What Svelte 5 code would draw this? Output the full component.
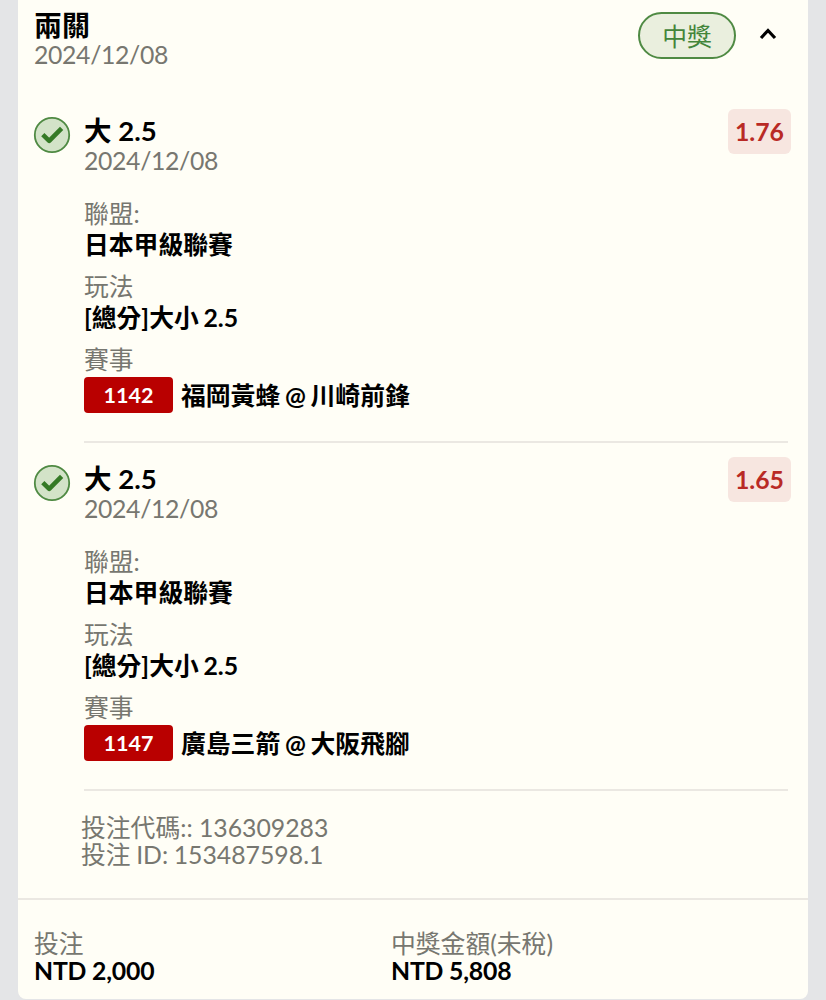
<script>
  let open = $state(true)

  const legs = [
    {
      pick: '大 2.5',
      date: '2024/12/08',
      odds: '1.76',
      league: '日本甲級聯賽',
      market: '[總分]大小 2.5',
      code: '1142',
      match: '福岡黃蜂 @ 川崎前鋒',
    },
    {
      pick: '大 2.5',
      date: '2024/12/08',
      odds: '1.65',
      league: '日本甲級聯賽',
      market: '[總分]大小 2.5',
      code: '1147',
      match: '廣島三箭 @ 大阪飛腳',
    },
  ]

  const totals = [
    { label: '投注', value: 'NTD 2,000' },
    { label: '中獎金額(未稅)', value: 'NTD 5,808' },
  ]
</script>

<main>
  <article>
    <header>
      <div>
        <h1>兩關</h1>
        <p class="date">2024/12/08</p>
      </div>
      <span class="status">中獎</span>
      <button aria-label="toggle" onclick={() => (open = !open)}>
        <svg class:closed={!open} viewBox="0 0 18 12" width="18" height="12">
          <path d="M2 10 9 2.5l7 7.5" />
        </svg>
      </button>
    </header>

    {#if open}
      {#each legs as leg}
        <section class="leg">
          <svg class="check" viewBox="0 0 38 38" width="38" height="38">
            <circle cx="19" cy="19" r="17.2" />
            <path d="M9.8 18.6l6.4 6.2L28.6 12.4" />
          </svg>
          <div class="body">
            <div class="top">
              <div>
                <h2>{leg.pick}</h2>
                <p class="date">{leg.date}</p>
              </div>
              <span class="odds">{leg.odds}</span>
            </div>
            <dl>
              <dt>聯盟:</dt>
              <dd>{leg.league}</dd>
              <dt>玩法</dt>
              <dd>{leg.market}</dd>
              <dt>賽事</dt>
              <dd class="match"><span class="code">{leg.code}</span>{leg.match}</dd>
            </dl>
          </div>
        </section>
      {/each}

      <div class="ids">
        <p>投注代碼:: 136309283</p>
        <p>投注 ID: 153487598.1</p>
      </div>
    {/if}

    <footer>
      {#each totals as total}
        <div>
          <p>{total.label}</p>
          <strong>{total.value}</strong>
        </div>
      {/each}
    </footer>
  </article>
</main>

<style>
  main {
    box-sizing: border-box;
    height: 1000px;
    padding: 0 18px 1px;
    background: #e4e5e7;
    color: #000;
    font-family: Lato, 'Noto Sans CJK TC', sans-serif;
    font-size: 24.8px;
    line-height: 30px;
  }

  article {
    box-sizing: border-box;
    height: 999px;
    background: #fffef6;
    border-radius: 0 0 8px 8px;
  }

  h1,
  h2,
  p,
  dl,
  dd {
    margin: 0;
  }

  h1,
  h2 {
    font-size: 28px;
    font-weight: 700;
    line-height: 30px;
  }

  h2 {
    font-size: 27.5px;
  }

  .date,
  dt,
  .ids,
  footer p {
    color: #777770;
  }

  .date {
    letter-spacing: -0.35px;
  }

  header {
    display: flex;
    align-items: flex-start;
    height: 105px;
    padding: 10px 31px 0 16px;
    box-sizing: border-box;

    & div {
      flex-grow: 1;
    }

    & button {
      display: flex;
      margin: 18px 0 0 23px;
      padding: 0;
      border: none;
      background: none;
    }

    & path {
      fill: none;
      stroke: #000;
      stroke-width: 3.2;
    }

    & .closed {
      transform: rotate(180deg);
    }
  }

  .status {
    box-sizing: border-box;
    width: 98px;
    height: 47px;
    margin-top: 2px;
    border: 2px solid #4f8a43;
    border-radius: 24px;
    background: #eaefde;
    color: #43853a;
    line-height: 45px;
    text-align: center;
  }

  .leg {
    display: flex;
    gap: 13px;
    height: 348px;
    padding: 0 17px 0 15px;
  }

  .check {
    flex: none;
    margin-top: 11px;

    & circle {
      fill: #d3e3c8;
      stroke: #4f8a43;
      stroke-width: 1.8;
    }

    & path {
      fill: none;
      stroke: #357a26;
      stroke-width: 4.6;
      stroke-linejoin: round;
    }
  }

  .body {
    flex-grow: 1;
    padding-top: 11px;

    /* divider stops a little short of the odds box */
    &::after {
      content: '';
      display: block;
      height: 2px;
      margin: 28px 3px 0 0;
      background: #ebe8e2;
    }
  }

  .top {
    display: flex;
    justify-content: space-between;
    align-items: flex-start;
  }

  .odds {
    width: 63px;
    height: 45px;
    margin-top: -7px;
    border-radius: 6px;
    background: #f7e6e0;
    color: #b92a25;
    font-weight: 700;
    line-height: 46px;
    text-align: center;
  }

  dl {
    margin-top: 23px;
  }

  dd {
    margin-bottom: 12px;
    padding-top: 1px;
    font-weight: 700;
    word-spacing: -1.3px;
  }

  .match {
    display: flex;
    gap: 8px;
    height: 36px;
    margin: 2px 0 0;
    padding: 0;
    line-height: 38px;
  }

  .code {
    width: 89px;
    border-radius: 4px;
    background: #b90000;
    color: #fff;
    font-size: 21.5px;
    line-height: 37px;
    text-align: center;
  }

  .ids {
    height: 97px;
    padding: 13px 0 0 63px;
    box-sizing: border-box;
    line-height: 27px;

    & p + p {
      word-spacing: -0.8px;
    }
  }

  footer {
    display: grid;
    grid-template-columns: 357px 1fr;
    padding: 31px 16px 0;
    border-top: 2px solid #ebe8e2;
    line-height: 26.5px;

    & strong {
      display: block;
      letter-spacing: -0.2px;
    }
  }
</style>
